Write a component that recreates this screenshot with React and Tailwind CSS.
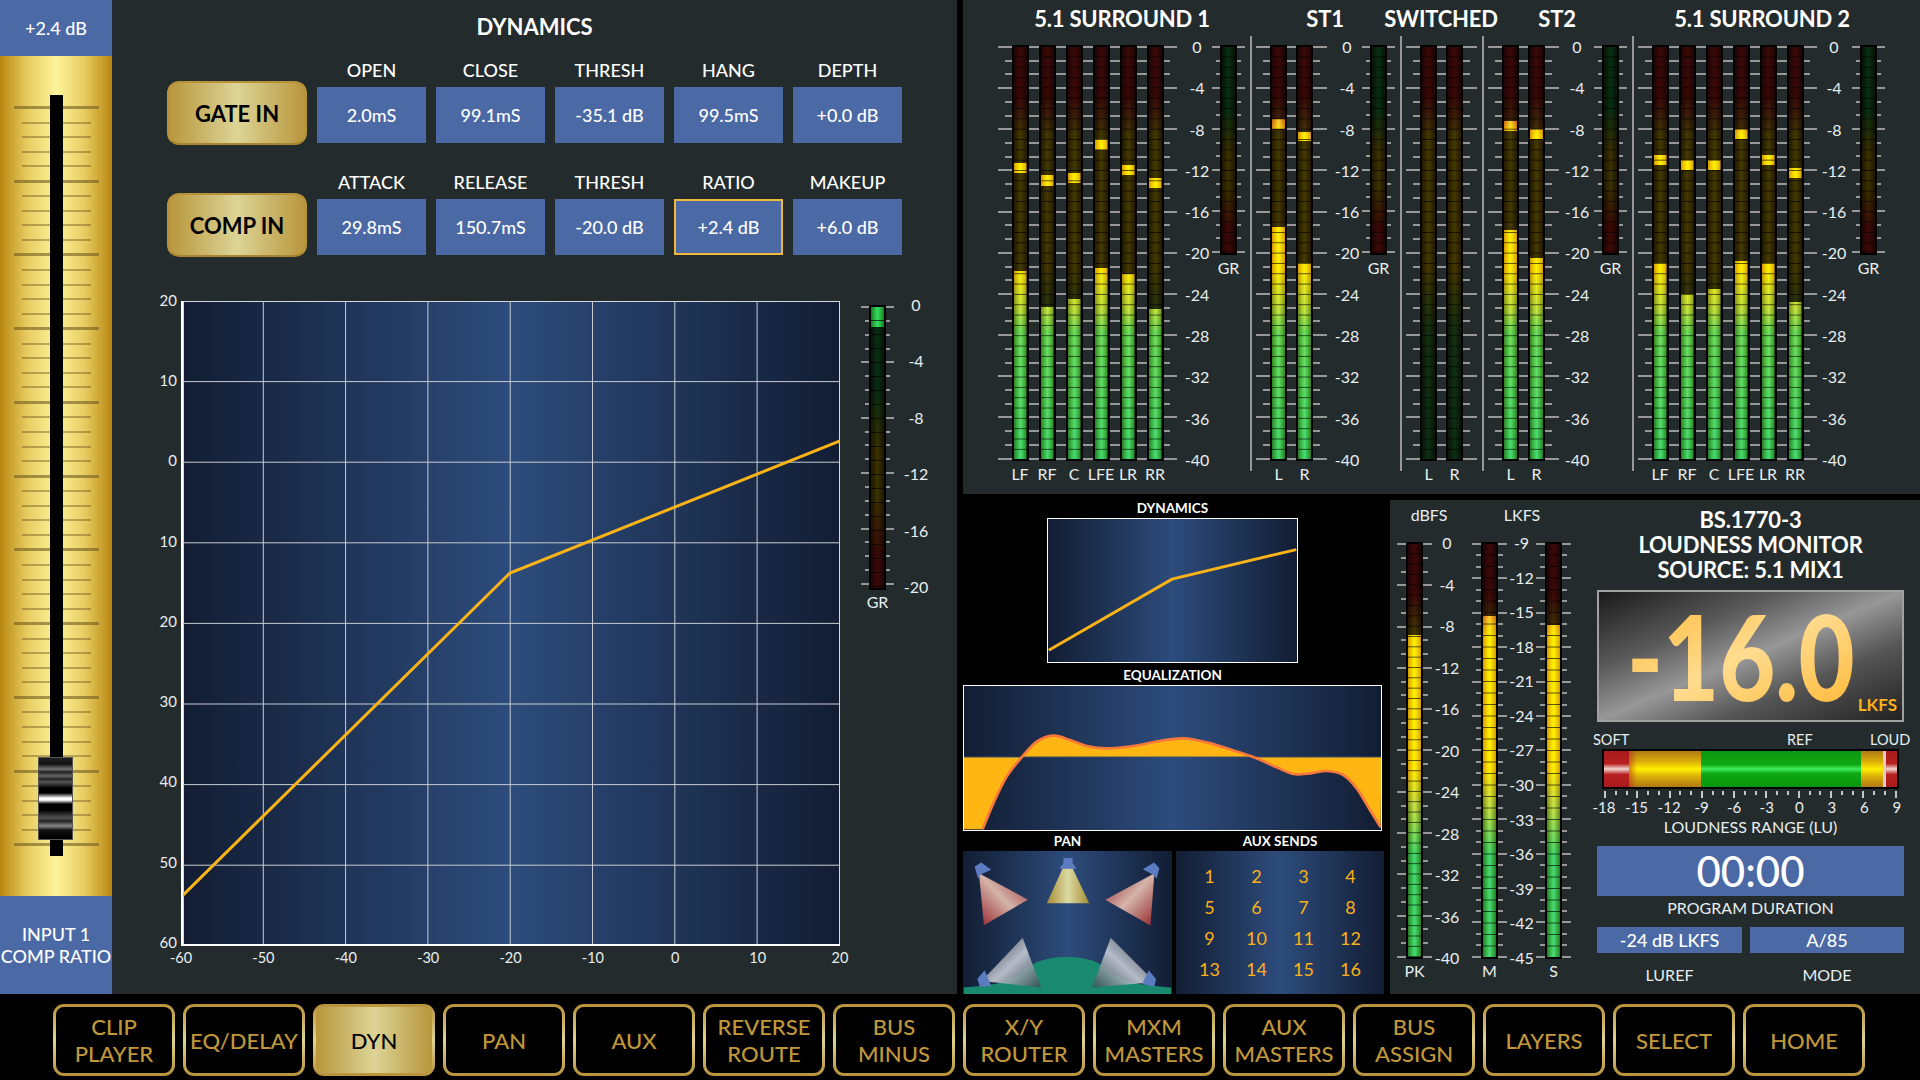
import React from "react";

const BLUE_BG = "bg-[linear-gradient(to_right,#121d33,#2d4c7c_50%,#121d33)]";
const GOLD_BG = "bg-[linear-gradient(to_right,#b8963c,#dcd496_50%,#b8963c)]";

const MAIN_COLORS = "bg-[linear-gradient(to_bottom,#e02018_0,#e02018_50px,#f09020_74px,#ffdc00_88px,#ffdc00_222px,#a8cc20_250px,#48bc40_285px,#2db04a_100%)]";
const LOUD_COLORS = "bg-[linear-gradient(to_bottom,#e02018_0,#e02018_50px,#f09020_72px,#ffdc00_90px,#ffdc00_225px,#8cc030_262px,#2db04a_310px,#2db04a_100%)]";
const GR_COLORS = "bg-[linear-gradient(to_bottom,#20b040_0,#20b040_30%,#e0c000_52%,#e0c000_68%,#e02018_88%,#e02018_100%)]";

function Meter({ h, colors, step = 10.33, level, peak, peakColors }) {
  return (
    <div className="relative isolate w-[17px] shrink-0 border-2 border-black bg-black" style={{ height: h }}>
      <div className={`absolute inset-0 opacity-[.17] ${colors}`} />
      {level != null && (
        <div className={`absolute inset-0 ${colors}`} style={{ clipPath: `inset(${level}px 0 0 0)` }} />
      )}
      {peak && (
        <div
          className={`absolute inset-0 ${peakColors || colors}`}
          style={{ clipPath: `inset(${peak[0]}px 0 calc(100% - ${peak[1]}px) 0)` }}
        />
      )}
      <div className="absolute inset-0 bg-[linear-gradient(to_right,#d4b088,#fff_50%,#d4b088)] mix-blend-multiply" />
      <div className="absolute inset-0 bg-[linear-gradient(to_right,transparent,rgba(255,255,255,.55)_50%,transparent)] mix-blend-overlay" />
      <div
        className="absolute inset-0 bg-[linear-gradient(to_top,rgba(0,0,0,.65)_1px,transparent_1px)]"
        style={{ backgroundSize: `100% ${step}px` }}
      />
    </div>
  );
}

function Ticks({ major, minor, inset, h }) {
  const count = major * (minor + 1) + 1;
  return (
    <div className="absolute inset-x-0 top-[1px] flex flex-col justify-between" style={{ height: h }}>
      {Array.from({ length: count }, (_, i) => (
        <div
          key={i}
          className="h-[2px] bg-[#989898]"
          style={i % (minor + 1) === 0 ? undefined : { marginLeft: inset, marginRight: inset }}
        />
      ))}
    </div>
  );
}

function Labels({ items, h, className }) {
  return (
    <div className={`flex shrink-0 flex-col justify-between text-[16px] text-[#e8eef0] ${className}`} style={{ height: h }}>
      {items.map((t) => (
        <div key={t} className="flex h-0 items-center justify-center">
          {t}
        </div>
      ))}
    </div>
  );
}

const DB40 = ["0", "-4", "-8", "-12", "-16", "-20", "-24", "-28", "-32", "-36", "-40"];
const DB20 = ["0", "-4", "-8", "-12", "-16", "-20"];
const LKFS = ["-9", "-12", "-15", "-18", "-21", "-24", "-27", "-30", "-33", "-36", "-39", "-42", "-45"];

function BarGroup({ bars, width, gap, inset = 7 }) {
  return (
    <div className={`relative flex shrink-0 items-start justify-center ${gap}`} style={{ width }}>
      <Ticks major={10} minor={2} inset={inset} h={414} />
      {bars.map((b) => (
        <div key={b.name} className="relative flex w-[17px] flex-col items-center">
          <Meter h={416} colors={MAIN_COLORS} level={b.level} peak={b.peak} />
          <span className="mt-[3px] text-[16px] leading-5 whitespace-nowrap text-[#e8eef0]">{b.name}</span>
        </div>
      ))}
    </div>
  );
}

function GrMeter({ className }) {
  return (
    <div className={`relative flex w-[33px] shrink-0 flex-col items-center ${className}`}>
      <Ticks major={5} minor={2} inset={4} h={207} />
      <div className="relative">
        <Meter h={210} colors={GR_COLORS} />
      </div>
      <span className="mt-[3px] text-[16px] leading-5 text-[#e8eef0]">GR</span>
    </div>
  );
}

function Sep({ className }) {
  return <div className={`-mt-[9px] h-[435px] w-[2px] shrink-0 bg-[#989898] ${className}`} />;
}

const S1 = [
  { name: "LF", level: 224, peak: [116, 126] },
  { name: "RF", level: 260, peak: [128, 139] },
  { name: "C", level: 252, peak: [126, 136] },
  { name: "LFE", level: 221, peak: [92, 103] },
  { name: "LR", level: 227, peak: [118, 128] },
  { name: "RR", level: 262, peak: [131, 141] },
];
const ST1 = [
  { name: "L", level: 180, peak: [72, 82] },
  { name: "R", level: 216, peak: [85, 94] },
];
const SW = [{ name: "L" }, { name: "R" }];
const ST2 = [
  { name: "L", level: 183, peak: [74, 84] },
  { name: "R", level: 211, peak: [82, 92] },
];
const S2 = [
  { name: "LF", level: 216, peak: [108, 118] },
  { name: "RF", level: 247, peak: [113, 123] },
  { name: "C", level: 242, peak: [113, 123] },
  { name: "LFE", level: 214, peak: [82, 92] },
  { name: "LR", level: 216, peak: [108, 118] },
  { name: "RR", level: 255, peak: [121, 131] },
];

function MeterBridge() {
  return (
    <div className="h-[494px] bg-[#232b2d]">
      <div className="flex h-[45px] items-start pt-[6px] text-[22px] leading-[26px] font-bold tracking-[-0.2px] text-white">
        <div className="ml-[59px] w-[200px] text-center">5.1 SURROUND 1</div>
        <div className="ml-[63px] w-[80px] text-center">ST1</div>
        <div className="ml-[16px] w-[120px] text-center">SWITCHED</div>
        <div className="ml-[16px] w-[80px] text-center">ST2</div>
        <div className="ml-[65px] w-[200px] text-center">5.1 SURROUND 2</div>
      </div>
      <div className="flex items-start pl-[35px]">
        <BarGroup bars={S1} width={179} gap="gap-[10px]" />
        <Labels items={DB40} h={413} className="mt-[2px] w-[40px]" />
        <GrMeter className="-ml-[5px]" />
        <Sep className="ml-[5px]" />
        <div className="ml-[4px]">
          <BarGroup bars={ST1} width={71} gap="gap-[9px]" />
        </div>
        <Labels items={DB40} h={413} className="mt-[2px] w-[40px]" />
        <GrMeter className="-ml-[5px]" />
        <Sep className="ml-[5px]" />
        <div className="ml-[4px]">
          <BarGroup bars={SW} width={71} gap="gap-[9px]" />
        </div>
        <Sep className="ml-[5px]" />
        <div className="ml-[4px]">
          <BarGroup bars={ST2} width={71} gap="gap-[9px]" />
        </div>
        <Labels items={DB40} h={413} className="mt-[2px] -ml-[2px] w-[40px]" />
        <GrMeter className="-ml-[3px]" />
        <Sep className="ml-[5px]" />
        <div className="ml-[4px]">
          <BarGroup bars={S2} width={179} gap="gap-[10px]" />
        </div>
        <Labels items={DB40} h={413} className="mt-[2px] -ml-[3px] w-[40px]" />
        <GrMeter className="-ml-[2px]" />
      </div>
    </div>
  );
}

function Fader() {
  const rows = Array.from({ length: 51 }, (_, i) => i);
  return (
    <div className="flex w-[112px] shrink-0 flex-col">
      <div className="flex h-[56px] items-center justify-center bg-[#4a69a5] text-[18px] font-medium text-white">+2.4 dB</div>
      <div className="relative flex-1 bg-[linear-gradient(to_right,#b8870f,#e8cd62_25%,#fdf39b_50%,#e8cd62_75%,#b8870f)] pt-[50px]">
        <div className="flex h-[741px] flex-col items-center justify-between">
          {rows.map((i) =>
            i % 5 === 0 ? (
              <div key={i} className="h-[3px] w-[85px] bg-[#6e5a1e]/60" />
            ) : (
              <div key={i} className="h-[2px] w-[69px] bg-[#6e5a1e]/45" />
            )
          )}
        </div>
        <div className="absolute top-[39px] left-[50px] h-[761px] w-[13px] bg-black" />
        <div className="absolute top-[701px] left-[38px] h-[83px] w-[35px] border border-[#555] bg-[linear-gradient(to_bottom,#222_0,#111_6px,#777_11px,#222_14px,#666_18px,#222_21px,#555_24px,#000_30px,#000_35px,#fff_40px,#fff_42px,#000_46px,#000_52px,#555_60px,#222_63px,#888_68px,#111_72px,#000_80px)]" />
      </div>
      <div className="flex h-[98px] flex-col items-center justify-center bg-[#4a69a5] text-[18px] leading-[22px] font-medium whitespace-nowrap text-white">
        <div>INPUT 1</div>
        <div>COMP RATIO</div>
      </div>
    </div>
  );
}

function GoldButton({ children }) {
  return (
    <div className={`-mb-[2px] flex h-[64px] w-[140px] shrink-0 items-center justify-center rounded-[12px] border-2 border-[#b7923a] border-b-[#a98530] text-[22px] font-bold text-black ${GOLD_BG}`}>
      {children}
    </div>
  );
}

function Param({ label, value, selected }) {
  return (
    <div className="flex w-[109px] flex-col items-center">
      <div className="mb-[5px] h-[24px] text-[18px] leading-[24px] font-medium text-white">{label}</div>
      <div className={`flex h-[56px] w-full items-center justify-center bg-[#4a69a5] text-[18px] font-medium text-white ${selected ? "border-2 border-[#f0b838]" : ""}`}>
        {value}
      </div>
    </div>
  );
}

function ParamRow({ button, params, className }) {
  return (
    <div className={`flex items-end gap-[10px] pl-[55px] ${className}`}>
      <GoldButton>{button}</GoldButton>
      {params.map((p) => (
        <Param key={p.label} {...p} />
      ))}
    </div>
  );
}

function TransferGraph() {
  const xs = Array.from({ length: 7 }, (_, i) => (i + 1) * 82.3);
  const ys = Array.from({ length: 7 }, (_, i) => (i + 1) * 80.6);
  return (
    <div className={`relative h-[645px] w-[659px] shrink-0 border-b-2 border-l-2 border-white ${BLUE_BG}`}>
      <svg className="absolute top-0 left-0" width="657" height="643" viewBox="2 0 657 643">
        <rect x="2.5" y="0.5" width="656" height="643" fill="none" stroke="#d4d8dc" />
        {xs.map((x) => (
          <line key={x} x1={x} x2={x} y1="0" y2="645" stroke="#c8ccd2" strokeWidth="1" />
        ))}
        {ys.map((y) => (
          <line key={y} x1="0" x2="659" y1={y} y2={y} stroke="#c8ccd2" strokeWidth="1" />
        ))}
        <polyline points="0,596 329,272 659,140" fill="none" stroke="#fcb317" strokeWidth="3" />
      </svg>
    </div>
  );
}

function DynamicsPanel() {
  return (
    <div className="w-[845px] shrink-0 bg-[#232b2d] pt-[14px] text-white">
      <div className="text-center text-[22px] leading-[26px] font-bold">DYNAMICS</div>
      <ParamRow
        className="mt-[18px]"
        button="GATE IN"
        params={[
          { label: "OPEN", value: "2.0mS" },
          { label: "CLOSE", value: "99.1mS" },
          { label: "THRESH", value: "-35.1 dB" },
          { label: "HANG", value: "99.5mS" },
          { label: "DEPTH", value: "+0.0 dB" },
        ]}
      />
      <ParamRow
        className="mt-[27px]"
        button="COMP IN"
        params={[
          { label: "ATTACK", value: "29.8mS" },
          { label: "RELEASE", value: "150.7mS" },
          { label: "THRESH", value: "-20.0 dB" },
          { label: "RATIO", value: "+2.4 dB", selected: true },
          { label: "MAKEUP", value: "+6.0 dB" },
        ]}
      />
      <div className="mt-[46px] flex items-start pl-[45px]">
        <div className="mr-[4px] -mt-[1px] flex h-[642px] w-[20px] shrink-0 flex-col justify-between text-[15px] text-[#e8eef0]">
          {["20", "10", "0", "10", "20", "30", "40", "50", "60"].map((t, i) => (
            <div key={i} className="flex h-0 items-center justify-end">{t}</div>
          ))}
        </div>
        <div className="w-[659px] shrink-0">
          <TransferGraph />
          <div className="mt-[12px] flex justify-between text-[14.5px] text-[#e8eef0]">
            {["-60", "-50", "-40", "-30", "-20", "-10", "0", "10", "20"].map((t) => (
              <div key={t} className="flex h-0 w-0 items-center justify-center">{t}</div>
            ))}
          </div>
        </div>
        <div className="ml-[21px] flex items-start pt-[4px]">
          <div className="relative flex w-[33px] shrink-0 flex-col items-center">
            <div className="relative h-0 w-full">
              <Ticks major={5} minor={3} inset={4} h={279} />
            </div>
            <div className="relative">
              <Meter h={285} colors={GR_COLORS} step={14} peak={[0, 20]} />
            </div>
            <span className="mt-[2px] text-[16px] leading-5 text-[#e8eef0]">GR</span>
          </div>
          <Labels items={DB20} h={282} className="ml-[2px] w-[40px]" />
        </div>
      </div>
    </div>
  );
}

// catmull-rom through the points, good enough for the eq curve
function smooth(pts) {
  let d = "";
  for (let i = 0; i < pts.length - 1; i++) {
    const p0 = pts[i - 1] || pts[i];
    const p1 = pts[i];
    const p2 = pts[i + 1];
    const p3 = pts[i + 2] || p2;
    d += ` C ${p1[0] + (p2[0] - p0[0]) / 6} ${p1[1] + (p2[1] - p0[1]) / 6} ${p2[0] - (p3[0] - p1[0]) / 6} ${p2[1] - (p3[1] - p1[1]) / 6} ${p2[0]} ${p2[1]}`;
  }
  return d;
}

const EQ_POINTS = [
  [68, 508], [100, 430], [140, 350], [185, 292], [230, 245], [280, 227], [330, 240], [380, 258], [440, 265],
  [520, 258], [600, 243], [670, 235], [740, 247], [810, 268], [880, 291], [950, 322], [1000, 342], [1050, 340],
  [1100, 333], [1150, 345], [1190, 385], [1230, 450], [1262, 502],
];

function EqCurve() {
  const curve = smooth(EQ_POINTS);
  return (
    <svg className="block h-full w-full" viewBox="12 78 1251 432" preserveAspectRatio="none">
      <path d={`M 10 291 L 10 508 L 68 508 ${curve} L 1264 291 Z`} fill="#ffb612" />
      <line x1="10" x2="1264" y1="291" y2="291" stroke="#3d4c64" strokeWidth="3" />
      <path d={`M 68 508 ${curve}`} fill="none" stroke="#f8783c" strokeWidth="8" />
    </svg>
  );
}

function PanDiagram() {
  return (
    <svg className="block h-full w-full" viewBox="9 573 627 432">
      <defs>
        <linearGradient id="coneL" x1="0" y1="1" x2="1" y2="0">
          <stop offset="0" stopColor="#96262c" />
          <stop offset="0.5" stopColor="#d4b4aa" />
          <stop offset="1" stopColor="#96262c" />
        </linearGradient>
        <linearGradient id="coneR" x1="0" y1="0" x2="1" y2="1">
          <stop offset="0" stopColor="#96262c" />
          <stop offset="0.5" stopColor="#d4b4aa" />
          <stop offset="1" stopColor="#96262c" />
        </linearGradient>
        <linearGradient id="coneC" x1="0" y1="0" x2="1" y2="0">
          <stop offset="0" stopColor="#a88c34" />
          <stop offset="0.5" stopColor="#dcdaa4" />
          <stop offset="1" stopColor="#a88c34" />
        </linearGradient>
        <linearGradient id="coneBL" x1="0" y1="0" x2="1" y2="1">
          <stop offset="0" stopColor="#3c4450" stopOpacity="0.8" />
          <stop offset="0.5" stopColor="#d0d4dc" stopOpacity="0.85" />
          <stop offset="1" stopColor="#3c4450" stopOpacity="0.8" />
        </linearGradient>
        <linearGradient id="coneBR" x1="1" y1="0" x2="0" y2="1">
          <stop offset="0" stopColor="#3c4450" stopOpacity="0.8" />
          <stop offset="0.5" stopColor="#d0d4dc" stopOpacity="0.85" />
          <stop offset="1" stopColor="#3c4450" stopOpacity="0.8" />
        </linearGradient>
      </defs>
      <path
        d="M9 985 C 100 978 160 972 200 925 C 240 897 290 893 320 893 C 360 893 400 898 440 925 C 480 972 540 978 636 985 L636 1005 L9 1005 Z"
        fill="#198a70"
      />
      <polygon points="55,640 203,720 70,797" fill="url(#coneL)" />
      <polygon points="585,640 437,720 573,798" fill="url(#coneR)" />
      <polygon points="308,625 338,625 388,731 260,731" fill="url(#coneC)" />
      <polygon points="78,950 187,835 243,985 85,968" fill="url(#coneBL)" />
      <polygon points="563,945 453,835 397,985 555,972" fill="url(#coneBR)" />
      <g fill="#5b7cc0">
        <polygon points="42,620 62,608 92,630 60,644 52,656" />
        <polygon points="310,594 338,594 338,610 350,627 298,627 310,610" />
        <polygon points="550,628 584,608 600,625 592,656 580,644" />
        <polygon points="50,960 72,933 92,980 58,983" />
        <polygon points="548,975 568,933 590,960 585,983" />
      </g>
    </svg>
  );
}

function Overview() {
  return (
    <div className="w-[427px] shrink-0 bg-black text-white">
      <div className="h-[16px] w-[419px] text-center text-[13.5px] leading-4 font-bold">DYNAMICS</div>
      <div className={`mt-[2px] ml-[84px] h-[145px] w-[251px] border border-white ${BLUE_BG}`}>
        <svg className="block h-full w-full" viewBox="0 0 251 145">
          <polyline points="0,133 125,61 251,31" fill="none" stroke="#fcb317" strokeWidth="3" />
        </svg>
      </div>
      <div className="mt-[4px] h-[16px] w-[419px] text-center text-[13.5px] leading-4 font-bold">EQUALIZATION</div>
      <div className={`mt-[2px] h-[146px] w-[419px] border border-white ${BLUE_BG}`}>
        <EqCurve />
      </div>
      <div className="mt-[2px] flex h-[16px] text-center text-[13.5px] leading-4 font-bold">
        <div className="w-[209px]">PAN</div>
        <div className="ml-[4px] w-[208px]">AUX SENDS</div>
      </div>
      <div className="mt-[2px] flex gap-[4px]">
        <div className={`h-[143px] w-[209px] ${BLUE_BG}`}>
          <PanDiagram />
        </div>
        <div className={`grid h-[143px] w-[208px] grid-cols-[repeat(4,47px)] grid-rows-[repeat(4,31px)] content-center justify-center text-[18px] text-[#fbb117] ${BLUE_BG}`}>
          {Array.from({ length: 16 }, (_, i) => (
            <div key={i} className="flex items-center justify-center">{i + 1}</div>
          ))}
        </div>
      </div>
    </div>
  );
}

function LoudBlock({ major, minor, step, level, peak, label }) {
  return (
    <div className="relative flex w-[35px] shrink-0 flex-col items-center">
      <Ticks major={major} minor={minor} inset={4} h={415} />
      <div className="relative">
        <Meter h={417} colors={LOUD_COLORS} step={step} level={level} peak={peak} />
      </div>
      <span className="mt-[2px] text-[16px] leading-5 text-[#e8eef0]">{label}</span>
    </div>
  );
}

function RangeBar() {
  const ticks = Array.from({ length: 28 }, (_, i) => i);
  const labels = ["-18", "-15", "-12", "-9", "-6", "-3", "0", "3", "6", "9"];
  return (
    <div>
      <div className="mt-[9px] -ml-[4px] flex h-[18px] text-[14.5px] leading-[18px] whitespace-nowrap text-[#e8eef0]">
        <span className="w-[34px]">SOFT</span>
        <span className="ml-[160px] w-[25px]">REF</span>
        <span className="ml-[58px]">LOUD</span>
      </div>
      <div className="ml-[5px] flex h-[40px] w-[297px] border-2 border-black">
        <div className="w-[25px] bg-[linear-gradient(to_bottom,#a81a1a,#b82020_35%,#f0d8d0_50%,#b82020_65%,#a81a1a)]" />
        <div className="w-[72px] bg-[linear-gradient(to_right,rgba(176,32,26,.5),transparent_8px),linear-gradient(to_bottom,#b07a14,#dcb008_30%,#fff000_50%,#dcb008_70%,#b07a14)]" />
        <div className="w-[160px] bg-[linear-gradient(to_bottom,#0a960e,#0fa812_38%,#40f060_50%,#0fa812_62%,#0a960e)]" />
        <div className="w-[22px] bg-[linear-gradient(to_bottom,#b07a14,#dcb008_30%,#fff000_50%,#dcb008_70%,#b07a14)]" />
        <div className="w-[3px] bg-[#e8c8c8]" />
        <div className="flex-1 bg-[linear-gradient(to_bottom,#a81a1a,#b82020_35%,#f0d8d0_50%,#b82020_65%,#a81a1a)]" />
      </div>
      <div className="mt-[2px] ml-[7px] flex h-[7px] w-[293px] items-start justify-between">
        {ticks.map((i) => (
          <div key={i} className={i % 3 === 0 ? "h-[7px] w-[2px] bg-[#c8c8c8]" : "h-[4px] w-[2px] bg-[#c8c8c8]"} />
        ))}
      </div>
      <div className="ml-[7px] flex h-[18px] w-[293px] items-center justify-between text-[15px] text-[#e8eef0]">
        {labels.map((t) => (
          <div key={t} className="flex h-0 w-0 items-center justify-center">{t}</div>
        ))}
      </div>
    </div>
  );
}

function LoudnessPanel() {
  return (
    <div className="flex h-[494px] w-[530px] shrink-0 bg-[#232b2d] text-[#e8eef0]">
      <div className="w-[207px] shrink-0">
        <div className="flex h-[42px] pt-[5px] text-[16px] leading-5">
          <div className="ml-[7px] w-[64px] text-center">dBFS</div>
          <div className="ml-[31px] w-[60px] text-center">LKFS</div>
        </div>
        <div className="flex items-start pl-[7px]">
          <LoudBlock major={10} minor={2} step={10.33} level={91} label="PK" />
          <Labels items={DB40} h={415} className="mt-[1px] w-[30px]" />
          <div className="ml-[10px]">
            <LoudBlock major={12} minor={2} step={11.5} level={72} label="M" />
          </div>
          <Labels items={LKFS} h={415} className="mt-[1px] w-[29px]" />
          <LoudBlock major={12} minor={2} step={11.5} level={81} label="S" />
        </div>
      </div>
      <div className="w-[307px] shrink-0">
        <div className="pt-[7px] text-center text-[22px] leading-[25px] font-bold tracking-[-0.2px] text-white">
          <div>BS.1770-3</div>
          <div>LOUDNESS MONITOR</div>
          <div>SOURCE: 5.1 MIX1</div>
        </div>
        <div className="relative mt-[8px] flex h-[132px] items-center justify-center border-2 border-[#a0a0a0] bg-[linear-gradient(to_bottom_right,#1a1a1a,#5a5a5a_30%,#979797_50%,#555_70%,#222)]">
          <span className="-ml-[20px] scale-x-[.82] bg-[linear-gradient(to_bottom_right,#ffb733,#ffdc90_50%,#ffb733)] bg-clip-text text-[118px] leading-none font-black text-transparent">
            -16.0
          </span>
          <span className="absolute right-[5px] bottom-[3px] text-[17px] font-bold text-[#fbb117]">LKFS</span>
        </div>
        <RangeBar />
        <div className="mt-[1px] h-[20px] text-center text-[16px] leading-5">LOUDNESS RANGE (LU)</div>
        <div className="mt-[9px] flex h-[50px] items-center justify-center bg-[#4a69a5] text-[42px] font-medium text-white">00:00</div>
        <div className="mt-[2px] h-[20px] text-center text-[16px] leading-5">PROGRAM DURATION</div>
        <div className="mt-[9px] flex gap-[8px]">
          <div className="flex h-[26px] w-[145px] items-center justify-center bg-[#4a69a5] text-[18px] font-medium text-white">-24 dB LKFS</div>
          <div className="flex h-[26px] w-[154px] items-center justify-center bg-[#4a69a5] text-[18px] font-medium text-white">A/85</div>
        </div>
        <div className="mt-[12px] flex gap-[8px] text-[16px] leading-5">
          <div className="w-[145px] text-center">LUREF</div>
          <div className="w-[154px] text-center">MODE</div>
        </div>
      </div>
    </div>
  );
}

const NAV = [
  ["CLIP", "PLAYER"], ["EQ/DELAY"], ["DYN"], ["PAN"], ["AUX"], ["REVERSE", "ROUTE"], ["BUS", "MINUS"],
  ["X/Y", "ROUTER"], ["MXM", "MASTERS"], ["AUX", "MASTERS"], ["BUS", "ASSIGN"], ["LAYERS"], ["SELECT"], ["HOME"],
];

function NavBar() {
  return (
    <div className="flex flex-1 items-start gap-[8px] bg-black pt-[10px] pl-[53px]">
      {NAV.map((lines) => {
        const active = lines[0] === "DYN";
        return (
          <div
            key={lines.join(" ")}
            className="h-[72px] w-[122px] shrink-0 rounded-[11px] bg-[linear-gradient(to_bottom,#b8923a,#e0d48e_50%,#b8923a)] p-[3px]"
          >
            <div
              className={`flex h-full flex-col items-center justify-center rounded-[8px] text-[22px] leading-[27px] font-medium whitespace-nowrap ${
                active ? `text-black ${GOLD_BG}` : "bg-black text-[#c0983a]"
              }`}
            >
              {lines.map((l) => (
                <div key={l}>{l}</div>
              ))}
            </div>
          </div>
        );
      })}
    </div>
  );
}

export default function App() {
  return (
    <div className="flex h-[1080px] w-[1920px] flex-col overflow-hidden bg-black [font-family:Lato,sans-serif]">
      <div className="flex h-[994px] shrink-0">
        <Fader />
        <DynamicsPanel />
        <div className="ml-[6px] w-[957px] shrink-0">
          <MeterBridge />
          <div className="flex pt-[6px]">
            <Overview />
            <LoudnessPanel />
          </div>
        </div>
      </div>
      <NavBar />
    </div>
  );
}
